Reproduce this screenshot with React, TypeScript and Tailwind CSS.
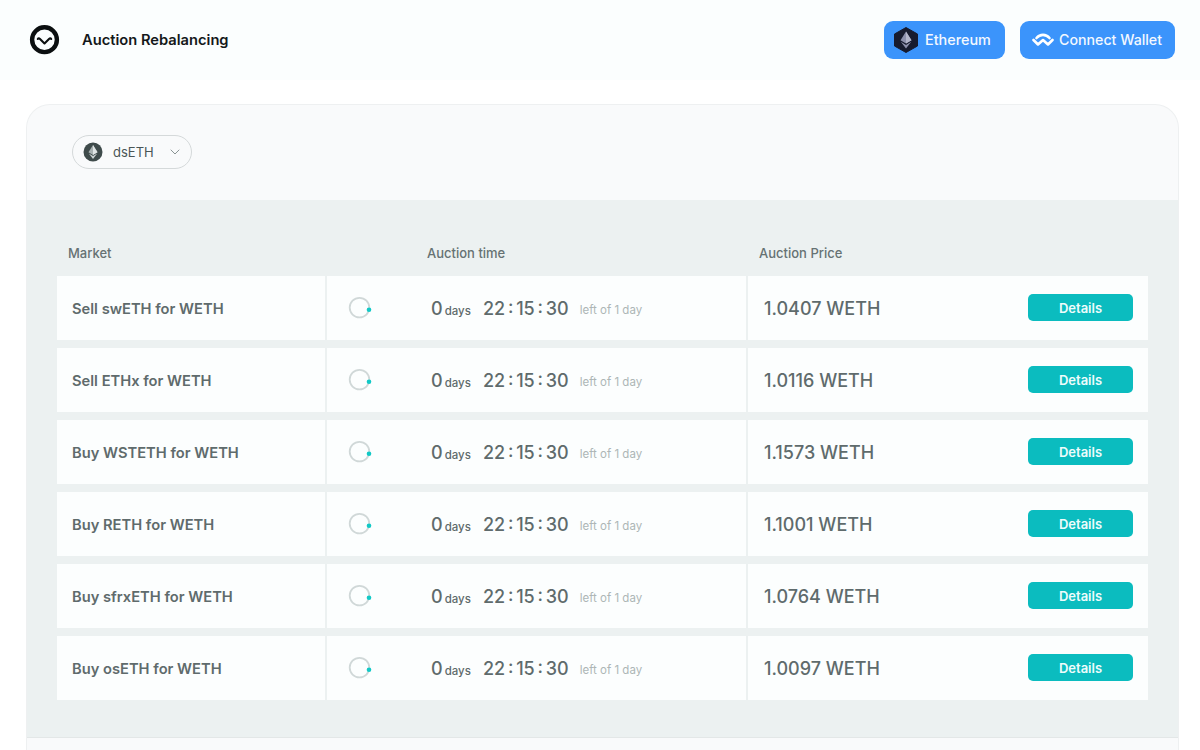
import { ChevronDown } from "lucide-react";

const rows = [
  { market: "Sell swETH for WETH", price: "1.0407 WETH" },
  { market: "Sell ETHx for WETH", price: "1.0116 WETH" },
  { market: "Buy WSTETH for WETH", price: "1.1573 WETH" },
  { market: "Buy RETH for WETH", price: "1.1001 WETH" },
  { market: "Buy sfrxETH for WETH", price: "1.0764 WETH" },
  { market: "Buy osETH for WETH", price: "1.0097 WETH" },
];

function Logo() {
  return (
    <svg width="32" height="32" viewBox="0 0 32 32" fill="none">
      <circle cx="15.5" cy="15.7" r="12.4" stroke="#0b0f10" strokeWidth="4.4" />
      <path d="M8.8 15 Q9.6 13.6 11 15 L15.5 19.5 L20 15 Q21.4 13.6 22.2 15" stroke="#0b0f10" strokeWidth="2.1" strokeLinecap="round" strokeLinejoin="round" />
    </svg>
  );
}

function EthBadge() {
  return (
    <svg width="24" height="26" viewBox="0 0 24 26">
      <path d="M12 0.5 L23.5 7 V19 L12 25.5 L0.5 19 V7 Z" fill="#171b2e" stroke="#171b2e" strokeLinejoin="round" />
      <path d="M12 4.5 L17.5 13.2 L12 16.4 L6.5 13.2 Z" fill="#8d90ac" />
      <path d="M12 4.5 L12 16.4 L17.5 13.2 Z" fill="#b4b6cb" />
      <path d="M6.8 14.8 L12 18 L17.2 14.8 L12 21.5 Z" fill="#8d90ac" />
    </svg>
  );
}

function WalletConnect() {
  return (
    <svg width="22" height="14" viewBox="0 0 22 14" fill="none">
      <path d="M4.5 5 C8 0.8 14 0.8 17.5 5" stroke="#ffffff" strokeWidth="2.6" strokeLinecap="round" />
      <path d="M1.5 7 L6 11.5 L11 7 L16 11.5 L20.5 7" stroke="#ffffff" strokeWidth="2.6" strokeLinecap="round" strokeLinejoin="round" />
    </svg>
  );
}

function TokenIcon() {
  return (
    <svg width="20" height="20" viewBox="0 0 20 20">
      <circle cx="10" cy="10" r="9.5" fill="#3f4b4b" />
      <path d="M10 3 L14.5 10.2 L10 13 L5.5 10.2 Z" fill="#a9b2b2" />
      <path d="M10 3 L10 13 L14.5 10.2 Z" fill="#dfe4e4" />
      <path d="M5.8 11.5 L10 14.1 L14.2 11.5 L10 17 Z" fill="#c9d0d0" />
    </svg>
  );
}

function Progress() {
  return (
    <svg width="24" height="24" viewBox="0 0 24 24" fill="none">
      <circle cx="11.5" cy="11.6" r="9.8" stroke="#d0d8d8" strokeWidth="1.8" />
      <circle cx="21" cy="13.7" r="2.3" fill="#11c9c6" />
    </svg>
  );
}

export default function App() {
  return (
    <div className="h-[750px] w-[1200px] overflow-hidden bg-white font-['Inter',sans-serif]">
      {/* top bar */}
      <div className="flex h-20 items-center bg-[#fbfefe] pl-[29px] pr-[25px]">
        <Logo />
        <span className="ml-[21px] text-[14.7px] font-semibold text-[#14181a]">Auction Rebalancing</span>
        <div className="ml-auto flex gap-[15px]">
          <button className="flex h-[38px] w-[121px] items-center gap-[7px] rounded-[9px] bg-[#3b94fb] pl-[10px] text-[14.4px] font-medium text-[#f3f8ff]">
            <EthBadge />
            Ethereum
          </button>
          <button className="flex h-[38px] w-[155px] items-center gap-[5px] rounded-[9px] bg-[#3b94fb] pl-[12px] text-[14.2px] font-medium text-[#f3f8ff]">
            <WalletConnect />
            Connect Wallet
          </button>
        </div>
      </div>

      {/* card */}
      <div className="ml-[26px] mt-6 w-[1153px] overflow-hidden rounded-t-[24px] border-x border-t border-[#eef0f1] bg-[#f9fafb]">
        <div className="flex h-[95px] items-center pb-px pl-[45px]">
          <div className="flex h-[34px] w-[120px] items-center rounded-full border-[1.5px] border-[#d5d9da] pl-[10px] text-[13px] text-[#4a5556]">
            <TokenIcon />
            <span className="ml-[10px] pt-[2px]">dsETH</span>
            <ChevronDown className="ml-[13px] text-[#8a9494]" size={16} strokeWidth={1.5} />
          </div>
        </div>

        <div className="h-[538px] border-b border-[#e3e7e7] bg-[#ecf1f1] pl-[30px] pr-[30px]">
          <div className="flex h-[76px] items-center pt-8 text-[13px] font-medium text-[#667273]">
            <span className="ml-[11px] w-[359px]">Market</span>
            <span className="w-[332px]">Auction time</span>
            <span>Auction Price</span>
          </div>
          <div className="flex flex-col gap-2">
            {rows.map((r) => (
              <div key={r.market} className="flex h-16 items-center bg-[#fcfefe] text-[#5f6b6c]">
                <div className="flex h-full w-[270px] items-center border-r-2 border-[#ecf1f1] pl-[15px] pt-[2px] text-[14.7px] font-semibold">
                  {r.market}
                </div>
                <div className="flex h-full w-[421px] items-center border-r-2 border-[#ecf1f1] pl-[21px] pt-[2px]">
                  <div className="-mt-[2px]">
                    <Progress />
                  </div>
                  <span className="ml-[59px] text-lg font-medium">0</span>
                  <span className="ml-[2px] mt-[5px] text-[11.5px] font-medium">days</span>
                  <span className="ml-3 text-lg font-medium [word-spacing:-2px]">22 : 15 : 30</span>
                  <span className="ml-[11px] mt-[3px] text-[11.5px] text-[#adb6b6]">left of 1 day</span>
                </div>
                <div className="flex h-full flex-1 items-center justify-between pl-4 pr-[15px]">
                  <span className="pt-[2px] text-lg font-medium">{r.price}</span>
                  <button className="mb-[2px] h-[27px] w-[105px] rounded-[5px] bg-[#0bbcbf] pt-1 text-[13px] font-semibold text-[#eefcfc]">
                    Details
                  </button>
                </div>
              </div>
            ))}
          </div>
        </div>
        <div className="h-20" />
      </div>
    </div>
  );
}
